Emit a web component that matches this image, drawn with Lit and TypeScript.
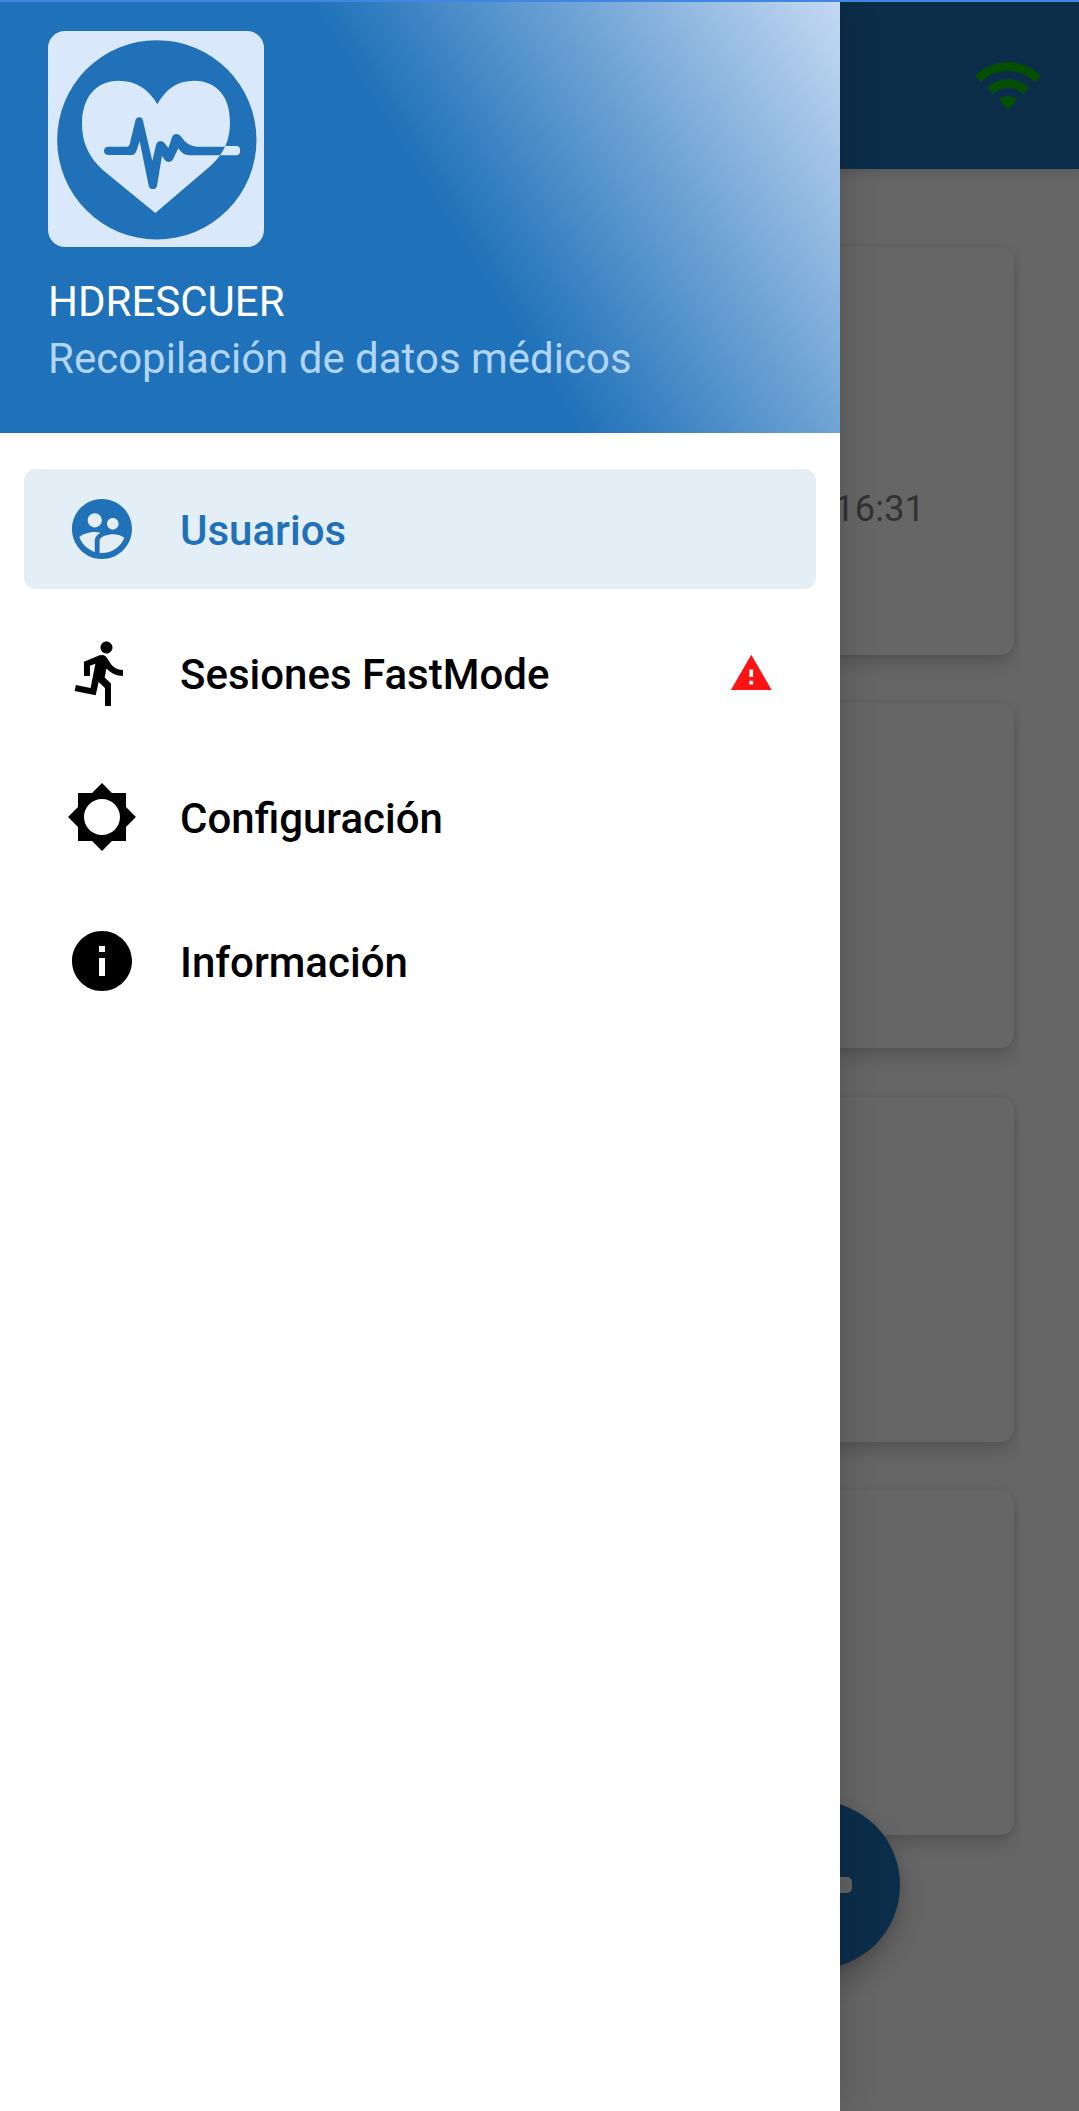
import { LitElement, html, css, svg } from "lit";
import { customElement, property } from "lit/decorators.js";
import { classMap } from "lit/directives/class-map.js";

const ICONS: Record<string, string> = {
  users:
    "M11.99 2c-5.52 0-10 4.48-10 10s4.48 10 10 10 10-4.48 10-10-4.48-10-10-10zm3.61 6.34c1.07 0 1.93.86 1.93 1.93 0 1.07-.86 1.93-1.93 1.93-1.07 0-1.93-.86-1.93-1.93-.01-1.07.86-1.93 1.93-1.93zm-6-1.58c1.3 0 2.36 1.06 2.36 2.36 0 1.3-1.06 2.36-2.36 2.36s-2.36-1.06-2.36-2.36c0-1.31 1.05-2.36 2.36-2.36zm0 9.13v3.75c-2.4-.75-4.3-2.6-5.14-4.96 1.05-1.12 3.67-1.69 5.14-1.69.53 0 1.2.08 1.9.22-1.64.87-1.9 2.02-1.9 2.68zM11.99 20c-.27 0-.53-.01-.79-.04v-4.07c0-1.42 2.94-2.13 4.4-2.13 1.07 0 2.92.39 3.84 1.15-1.17 2.97-4.06 5.09-7.45 5.09z",
  run:
    "M13.49 5.48c1.1 0 2-.9 2-2s-.9-2-2-2-2 .9-2 2 .9 2 2 2zm-3.6 13.9l1-4.4 2.1 2v6h2v-7.5l-2.1-2 .6-3c1.3 1.5 3.3 2.5 5.5 2.5v-2c-1.9 0-3.5-1-4.3-2.4l-1-1.6c-.4-.6-1-1-1.7-1-.3 0-.5.1-.8.1l-5.2 2.2v4.7h2v-3.4l1.8-.7-1.6 8.1-4.9-1-.4 2 7 1.4z",
  settings:
    "M20 15.31L23.31 12 20 8.69V4h-4.69L12 .69 8.69 4H4v4.69L.69 12 4 15.31V20h4.69L12 23.31 15.31 20H20v-4.69zM12 18c-3.31 0-6-2.69-6-6s2.69-6 6-6 6 2.69 6 6-2.69 6-6 6z",
  info:
    "M12 2C6.48 2 2 6.48 2 12s4.48 10 10 10 10-4.48 10-10S17.52 2 12 2zm1 15h-2v-6h2v6zm0-8h-2V7h2v2z",
  warning: "M1 21h22L12 2 1 21zm12-3h-2v-2h2v2zm0-4h-2v-4h2v4z",
  wifi:
    "M1 9l2 2c4.97-4.97 13.03-4.97 18 0l2-2C16.93 2.93 7.08 2.93 1 9zm8 8l3 3 3-3c-1.65-1.66-4.34-1.66-6 0zm-4-4l2 2c2.76-2.76 7.24-2.76 10 0l2-2C15.14 9.14 8.87 9.14 5 13z",
};

@customElement("md-icon")
class MdIcon extends LitElement {
  static styles = css`
    :host {
      display: block;
      flex: none;
      width: 72px;
      height: 72px;
    }
    .glyph {
      display: block;
      width: 100%;
      height: 100%;
      fill: currentColor;
    }
  `;
  @property() name = "info";
  render() {
    return html`<svg class="glyph" viewBox="0 0 24 24">${svg`<path d=${ICONS[this.name]}></path>`}</svg>`;
  }
}

@customElement("app-logo")
class AppLogo extends LitElement {
  static styles = css`
    :host {
      display: block;
      width: 216px;
      height: 216px;
      border-radius: 17px;
      overflow: hidden;
      background: #d9e8fb;
    }
    .art {
      display: block;
      width: 216px;
      height: 216px;
    }
    .disc,
    .pulse {
      fill: #2071b8;
    }
    .heart,
    .tail {
      fill: #d9e8fb;
    }
  `;
  render() {
    const heart =
      "M466 639L312 513C268 474 246 430 246 372C246 290 290 242 356 242C408 242 447 268 472 313C497 268 530 242 583 242C650 242 690 290 690 366C690 424 670 462 632 497Z";
    return html`<svg class="art" viewBox="144 93 648 648">
      <defs><clipPath id="heart"><path d=${heart}></path></clipPath></defs>
      <circle class="disc" cx="470.5" cy="419.5" r="299"></circle>
      <rect class="tail" x="600" y="438" width="120" height="28" rx="12"></rect>
      <path class="heart" d=${heart}></path>
      <g clip-path="url(#heart)">
        <path
          class="pulse"
          transform="translate(270 300)"
          d="M55 140H112Q117 140 119 133L136 62Q139 52 148 52Q157 52 159 62L187 183L198 135Q202 123 212 123Q220 123 226 132L235 144L246 112Q250 102 259 102Q268 102 275 112Q291 138 320 140H430V166H298Q278 166 265 145L249 178Q246 186 237 186Q228 186 224 179L216 167L201 257Q199 267 189 267Q178 267 176 257L149 124L140 151Q136 165 125 165H54Q42 163 42 152Q43 140 55 140Z"
        ></path>
      </g>
    </svg>`;
  }
}

interface Entry {
  icon: string;
  label: string;
  active?: boolean;
  alert?: boolean;
}

@customElement("nav-drawer")
class NavDrawer extends LitElement {
  static styles = css`
    :host {
      display: flex;
      flex-direction: column;
      background: #fff;
    }
    .header {
      box-sizing: border-box;
      height: 433px;
      padding: 31px 48px 0;
      background: linear-gradient(57.99deg, #1f71b9 0%, #1f71b9 49.6%, #d6e4f9 100%)
        left bottom / 840px 525px no-repeat;
      line-height: 57px;
      font-size: 42px;
      white-space: nowrap;
    }
    .name {
      margin-top: 26px;
      color: #fff;
    }
    .tagline {
      color: #b0d5f8;
    }
    .menu {
      display: flex;
      flex-direction: column;
      gap: 24px;
      padding: 36px 24px;
    }
    .item {
      display: flex;
      align-items: center;
      height: 120px;
      padding: 0 42px;
      border-radius: 12px;
      color: #000;
      font-size: 42px;
      font-weight: 500;
      white-space: nowrap;
    }
    .item.active {
      background: #e3eef7;
      color: #2071b8;
    }
    .label {
      flex: 1;
      margin-left: 42px;
      padding-top: 3px;
    }
    .alert {
      width: 44.5px;
      height: 44.5px;
      margin-right: 0.5px;
      color: #fc1414;
    }
  `;
  private entries: Entry[] = [
    { icon: "users", label: "Usuarios", active: true },
    { icon: "run", label: "Sesiones FastMode", alert: true },
    { icon: "settings", label: "Configuración" },
    { icon: "info", label: "Información" },
  ];
  render() {
    return html`
      <header class="header">
        <app-logo></app-logo>
        <div class="name">HDRESCUER</div>
        <div class="tagline">Recopilación de datos médicos</div>
      </header>
      <nav class="menu">
        ${this.entries.map(
          (e) => html`<div class=${classMap({ item: true, active: !!e.active })}>
            <md-icon name=${e.icon}></md-icon>
            <span class="label">${e.label}</span>
            ${e.alert ? html`<md-icon class="alert" name="warning"></md-icon>` : null}
          </div>`
        )}
      </nav>
    `;
  }
}

@customElement("app-root")
class AppRoot extends LitElement {
  static styles = css`
    :host {
      display: block;
      position: relative;
      width: 1079px;
      height: 2111px;
      overflow: hidden;
      background: #fff;
      font-family: Roboto, "Liberation Sans", sans-serif;
    }
    .toolbar {
      position: relative;
      box-sizing: border-box;
      display: flex;
      align-items: center;
      justify-content: flex-end;
      height: 169px;
      padding-right: 35px;
      background: #2072b9;
      color: #0ac800;
      box-shadow: 0 3px 12px rgba(0, 0, 0, 0.18);
    }
    .list {
      display: flex;
      flex-direction: column;
      gap: 48.3px;
      margin: 0 59px;
      padding: 78px 6px 60px;
      overflow: hidden;
    }
    .card {
      box-sizing: border-box;
      height: 345px;
      border-radius: 14px;
      background: #fff;
      box-shadow: 0 9px 18px rgba(0, 0, 0, 0.17), 0 0 6px rgba(0, 0, 0, 0.08);
    }
    .card.first {
      display: flex;
      align-items: flex-start;
      justify-content: flex-end;
      height: 408px;
      padding: 241px 89px 0 0;
    }
    .time {
      color: #7c7c7c;
      font-size: 36px;
      line-height: 42px;
      letter-spacing: 0.2px;
    }
    .fab {
      position: absolute;
      left: 732px;
      top: 1801px;
      display: flex;
      align-items: center;
      justify-content: center;
      width: 168px;
      height: 168px;
      border-radius: 50%;
      background: #2072b9;
      box-shadow: 0 14px 30px rgba(0, 0, 0, 0.24), 0 2px 8px rgba(0, 0, 0, 0.1);
    }
    .bar {
      width: 72px;
      height: 16px;
      border-radius: 5px;
      background: #f4f8fb;
    }
    .scrim {
      position: absolute;
      inset: 0;
      background: rgba(0, 0, 0, 0.6);
    }
    .drawer {
      position: absolute;
      left: 0;
      top: 0;
      width: 840px;
      height: 2111px;
      box-shadow: 0 0 36px rgba(0, 0, 0, 0.2);
    }
    .edge {
      position: absolute;
      left: 0;
      top: 0;
      width: 100%;
      height: 1.5px;
      background: #4187e2;
    }
  `;
  render() {
    return html`
      <div class="toolbar"><md-icon name="wifi"></md-icon></div>
      <main class="list">
        <div class="card first"><span class="time">16:31</span></div>
        <div class="card"></div>
        <div class="card"></div>
        <div class="card"></div>
      </main>
      <div class="fab"><div class="bar"></div></div>
      <div class="scrim"></div>
      <nav-drawer class="drawer"></nav-drawer>
      <div class="edge"></div>
    `;
  }
}
